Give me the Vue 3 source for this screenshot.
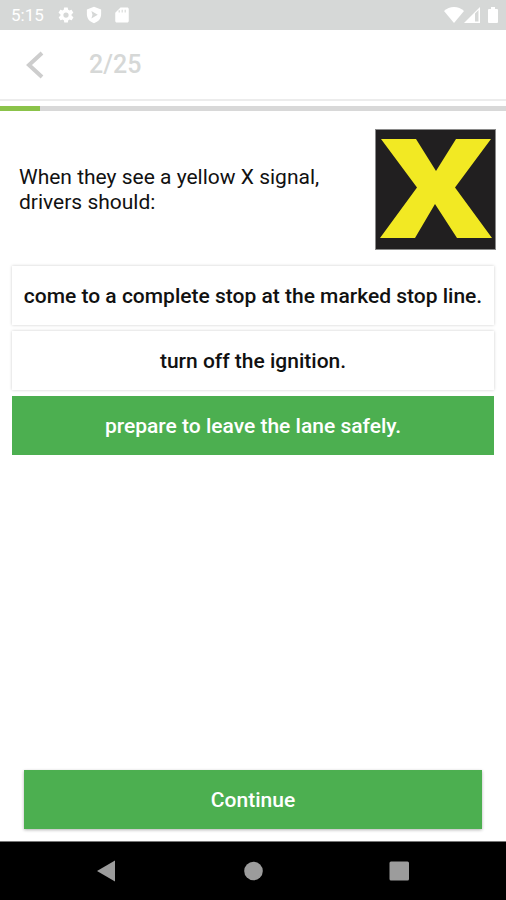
<script setup>
import { ref } from 'vue'

const current = 2
const total = 25
const options = [
  'come to a complete stop at the marked stop line.',
  'turn off the ignition.',
  'prepare to leave the lane safely.',
]
const selected = ref(2)
</script>

<template>
  <div class="screen">
    <div class="status">
      <span class="clock">5:15</span>
      <svg class="status-icon gear" viewBox="0 0 24 24" aria-hidden="true">
        <path fill-rule="evenodd" d="M19.4 13c0-.3.1-.6.1-1s0-.7-.1-1l2.100-1.600c.2-.2.3-.4.1-.7l-2-3.400c-.1-.2-.4-.3-.6-.2l-2.500 1c-.5-.4-1.100-.7-1.700-1l-.4-2.600c0-.3-.2-.5-.5-.5h-4c-.3 0-.5.200-.5.400l-.4 2.700c-.6.200-1.100.600-1.700 1l-2.500-1c-.2-.1-.5 0-.6.200l-2 3.400c-.1.200-.1.500.1.700L4.600 11c0 .3-.1.600-.1 1s0 .700.100 1l-2.100 1.600c-.2.200-.3.400-.1.700l2 3.400c.1.200.4.300.6.200l2.500-1c.5.400 1.100.700 1.700 1l.4 2.600c0 .3.200.5.500.5h4c.3 0 .5-.2.500-.4l.4-2.700c.6-.2 1.100-.6 1.700-1l2.500 1c.2.100.5 0 .6-.2l2-3.400c.1-.2.1-.5-.1-.7L19.400 13zM12 15.500a3.500 3.500 0 1 1 0-7 3.500 3.500 0 0 1 0 7z" />
      </svg>
      <svg class="status-icon shield" viewBox="0 0 24 24" aria-hidden="true">
        <path fill-rule="evenodd" d="M12 1 2.500 4.500V11c0 6 4 10 9.500 12 5.500-2 9.500-6 9.500-12V4.500L12 1zM8.500 6.500 17 11.500l-8.500 5 1.500-5-1.500-5z" />
      </svg>
      <svg class="status-icon card" viewBox="0 0 24 24" aria-hidden="true">
        <path fill-rule="evenodd" d="M19 2h-9L3 9v11c0 1.100.9 2 2 2h14c1.100 0 2-.9 2-2V4c0-1.100-.9-2-2-2zM9 8.500H7.500V5.500H9v3zm4 0h-1.500V5H13v3.500zm4 0h-1.500V5H17v3.500z" />
      </svg>
      <span class="spacer"></span>
      <svg class="wifi" viewBox="0 0 20 16" aria-hidden="true">
        <path d="M10 16 0 4C3 1.500 6 0 10 0s7 1.500 10 4L10 16z" />
      </svg>
      <svg class="signal" viewBox="0 0 16 16" aria-hidden="true">
        <path fill-rule="evenodd" d="M16 0v16H0L16 0zM11 6.500V14.500H14.500V3z" />
      </svg>
      <svg class="battery" viewBox="0 0 10 16" aria-hidden="true">
        <path d="M3 0h4v2h2q1 0 1 1v12q0 1-1 1H1q-1 0-1-1V3q0-1 1-1h2z" />
      </svg>
    </div>

    <header class="bar">
      <button class="back" type="button" aria-label="Back">
        <svg viewBox="0 0 18 28" aria-hidden="true">
          <path d="M16 2 3 14l13 12" />
        </svg>
      </button>
      <h1 class="count">{{ current }}/{{ total }}</h1>
    </header>

    <div class="progress" role="progressbar" aria-label="Questions" :aria-valuenow="current" aria-valuemin="0" :aria-valuemax="total">
      <div class="done" :style="{ width: (current / total) * 100 + '%' }"></div>
    </div>

    <main class="content">
      <div class="question">
        <p id="question">When they see a yellow X signal, drivers should:</p>
        <svg class="sign" viewBox="0 0 121 121" role="img" aria-label="Yellow X signal">
          <rect width="121" height="121" fill="#8a8a8a" />
          <rect x="1" y="1" width="119" height="119" fill="#211f20" />
          <path fill="#f2e923" d="M6 10H41L61 42 81 10H116L80 58.500 117 109H82L60 75 40 109H5L42 58.500z" />
        </svg>
      </div>

      <div class="options" role="group" aria-labelledby="question">
        <button
          v-for="(option, i) in options"
          :key="option"
          type="button"
          class="option"
          :class="{ chosen: selected === i }"
          :aria-pressed="selected === i"
          @click="selected = i"
        >
          {{ option }}
        </button>
      </div>

      <button class="continue" type="button">Continue</button>
    </main>

    <nav class="nav">
      <button type="button" aria-label="System back">
        <svg viewBox="0 0 22 22"><path d="M19 0.500V21.500L1 11z" /></svg>
      </button>
      <button type="button" aria-label="Home">
        <svg viewBox="0 0 22 22"><circle cx="11.500" cy="11" r="9.300" /></svg>
      </button>
      <button type="button" aria-label="Recent apps">
        <svg viewBox="0 0 22 22"><rect x="1.500" y="1.500" width="19.500" height="19" rx="1.500" /></svg>
      </button>
    </nav>
  </div>
</template>

<style>
body {
  margin: 0;
  background: #fff;
}
</style>

<style scoped>
.screen {
  display: flex;
  flex-direction: column;
  min-height: 100vh;
  font-family: Roboto, "Liberation Sans", sans-serif;
  color: #111;
  background: #fff;
}

button {
  border: 0;
  padding: 0;
  background: none;
  font: inherit;
  color: inherit;
  cursor: pointer;
}

svg {
  display: block;
}

.status {
  display: flex;
  align-items: center;
  height: 30px;
  box-sizing: border-box;
  padding: 0 8px 0 11px;
  background: #d6d8d7;
  color: #fff;
  fill: #fff;
}

.clock {
  width: 46px;
  font-size: 17px;
  line-height: 30px;
}

.status-icon {
  width: 18px;
  height: 18px;
  margin-right: 10px;
}

.spacer {
  flex: 1;
}

.wifi {
  width: 20px;
  height: 16px;
}

.signal {
  width: 16px;
  height: 16px;
  margin-right: 8px;
}

.battery {
  width: 10px;
  height: 16px;
}

.bar {
  display: flex;
  align-items: center;
  gap: 45px;
  height: 69px;
  padding: 0 26px;
  border-bottom: 2px solid #ececec;
}

.back {
  width: 18px;
  height: 28px;
}

.back path {
  fill: none;
  stroke: #cdcdcd;
  stroke-width: 4;
}

.count {
  margin: 0;
  font-size: 25px;
  line-height: 32px;
  font-weight: 500;
  color: #d6d8d7;
}

.progress {
  height: 5px;
  margin-top: 5px;
  background: #d8d8d8;
}

.done {
  height: 100%;
  background: #8bc34a;
}

.content {
  display: flex;
  flex: 1;
  flex-direction: column;
  padding: 18px 12px 12px;
}

.question {
  display: flex;
  align-items: center;
  justify-content: space-between;
  padding: 0 0 0 7px;
  margin-right: -2px;
}

.question p {
  flex: 1;
  max-width: 320px;
  margin: 0;
  font-size: 21px;
  line-height: 25px;
}

.sign {
  width: 121px;
  height: 121px;
}

.options {
  display: flex;
  flex-direction: column;
  gap: 6px;
  margin-top: 16px;
}

.option {
  min-height: 59px;
  padding: 4px;
  font-size: 21px;
  line-height: 24px;
  font-weight: 500;
  background: #fff;
  box-shadow: 0 0 3px rgba(0, 0, 0, 0.2);
}

.option.chosen {
  color: #fff;
  background: #4caf50;
  box-shadow: none;
}

.continue {
  min-height: 59px;
  margin: auto 12px 0;
  font-size: 21px;
  line-height: 24px;
  font-weight: 500;
  color: #fff;
  background: #4caf50;
  box-shadow: 0 1px 3px rgba(0, 0, 0, 0.3);
}

.nav {
  display: flex;
  justify-content: center;
  gap: 124px;
  height: 58px;
  border-top: 1px solid #777;
  background: #000;
  fill: #9c9c9c;
}

.nav svg {
  width: 22px;
  height: 22px;
}
</style>
